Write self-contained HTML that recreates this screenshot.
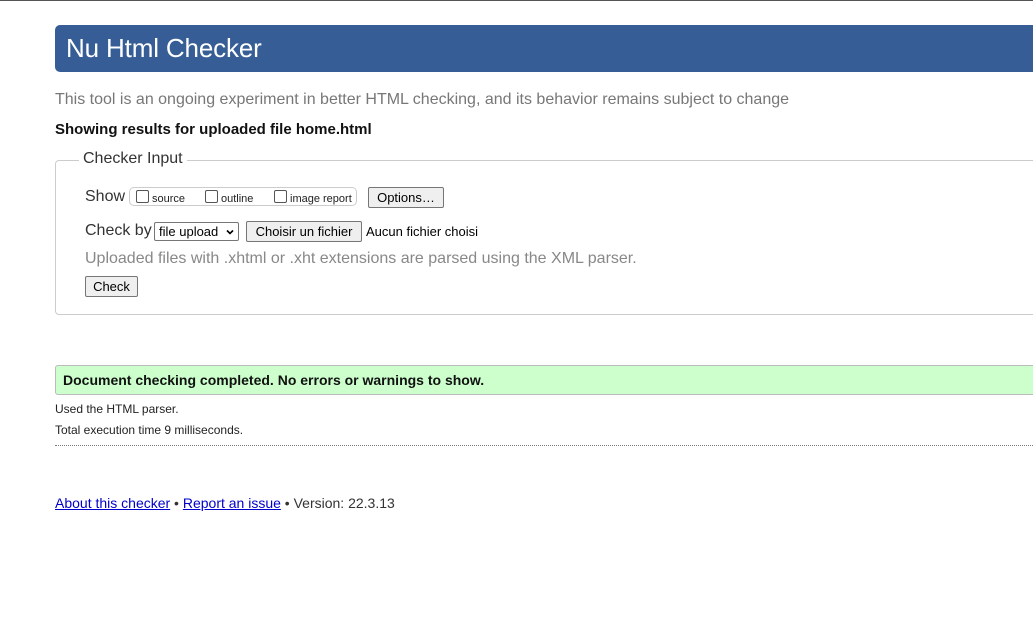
<!DOCTYPE html>
<html><head><meta charset="utf-8"><style>
body{margin:0;width:1033px;height:644px;overflow:hidden;background:#fff;font-family:"Liberation Sans",Arial,sans-serif;position:relative;color:#222}
.a{position:absolute;white-space:nowrap}
.btn{position:absolute;background:#efefef;border:1px solid #767676;border-radius:2px;font-size:13px;color:#000;box-sizing:border-box;text-align:center}
.cb{display:inline-block;width:11px;height:11px;border:1px solid #555;border-radius:2px;vertical-align:-1px;margin-right:3px}
</style></head><body>
<div class="a" style="left:0;top:0;width:1033px;height:1px;background:#555"></div>
<div class="a" style="left:55px;top:25px;width:990px;height:47px;background:#365d95;border-radius:5px"></div>
<div class="a" style="left:66px;top:33px;font-size:26px;letter-spacing:-0.15px;color:#fff">Nu Html Checker</div>
<div class="a" style="left:55px;top:91px;font-size:16px;color:#777">This tool is an ongoing experiment in better HTML checking, and its behavior remains subject to change</div>
<div class="a" style="left:55px;top:121px;font-size:15px;font-weight:bold;color:#111">Showing results for uploaded file home.html</div>
<div class="a" style="left:55px;top:160px;width:990px;height:155px;border:1px solid #ccc;border-radius:4px;box-sizing:border-box"></div>
<div class="a" style="left:79px;top:150px;padding:0 4px;background:#fff;font-size:16px;color:#333">Checker Input</div>
<div class="a" style="left:85px;top:188px;font-size:16px;color:#333">Show</div>
<div class="a" style="left:129px;top:187px;width:228px;height:19px;border:1px solid #ccc;border-radius:5px;box-sizing:border-box"></div>
<div class="a" style="left:136px;top:190px;font-size:11px;color:#222"><span class="cb"></span>source</div>
<div class="a" style="left:205px;top:190px;font-size:11px;color:#222"><span class="cb"></span>outline</div>
<div class="a" style="left:274px;top:190px;font-size:11px;color:#222"><span class="cb"></span>image report</div>
<div class="btn" style="left:368px;top:187px;width:76px;height:21px;line-height:19px">Options…</div>
<div class="a" style="left:85px;top:222px;font-size:16px;color:#333">Check by</div>
<div class="a" style="left:154px;top:222px;width:85px;height:19px;border:1px solid #767676;border-radius:2px;box-sizing:border-box;font-size:13px;line-height:17px;padding-left:4px;color:#000">file upload<svg style="position:absolute;right:4px;top:6px" width="8" height="6" viewBox="0 0 8 6"><path d="M1 1.5 L4 4.5 L7 1.5" stroke="#000" stroke-width="1.6" fill="none"/></svg></div>
<div class="btn" style="left:246px;top:221px;width:116px;height:21px;line-height:19px">Choisir un fichier</div>
<div class="a" style="left:366px;top:224px;font-size:13px;color:#000">Aucun fichier choisi</div>
<div class="a" style="left:85px;top:250px;font-size:16px;color:#888">Uploaded files with .xhtml or .xht extensions are parsed using the XML parser.</div>
<div class="btn" style="left:85px;top:276px;width:53px;height:21px;line-height:19px">Check</div>
<div class="a" style="left:55px;top:365px;width:990px;height:30px;background:#ccffcc;border:1px solid #bbb;border-radius:3px;box-sizing:border-box"></div>
<div class="a" style="left:63px;top:372px;font-size:14px;font-weight:bold;color:#111">Document checking completed. No errors or warnings to show.</div>
<div class="a" style="left:55px;top:402px;font-size:12px;color:#222">Used the HTML parser.</div>
<div class="a" style="left:55px;top:423px;font-size:12px;color:#222">Total execution time 9 milliseconds.</div>
<div class="a" style="left:55px;top:445px;width:990px;border-top:1px dotted #777"></div>
<div class="a" style="left:55px;top:495px;font-size:14px;color:#333"><span style="color:#00c;text-decoration:underline">About this checker</span> • <span style="color:#00c;text-decoration:underline">Report an issue</span> • Version: 22.3.13</div>
</body></html>
